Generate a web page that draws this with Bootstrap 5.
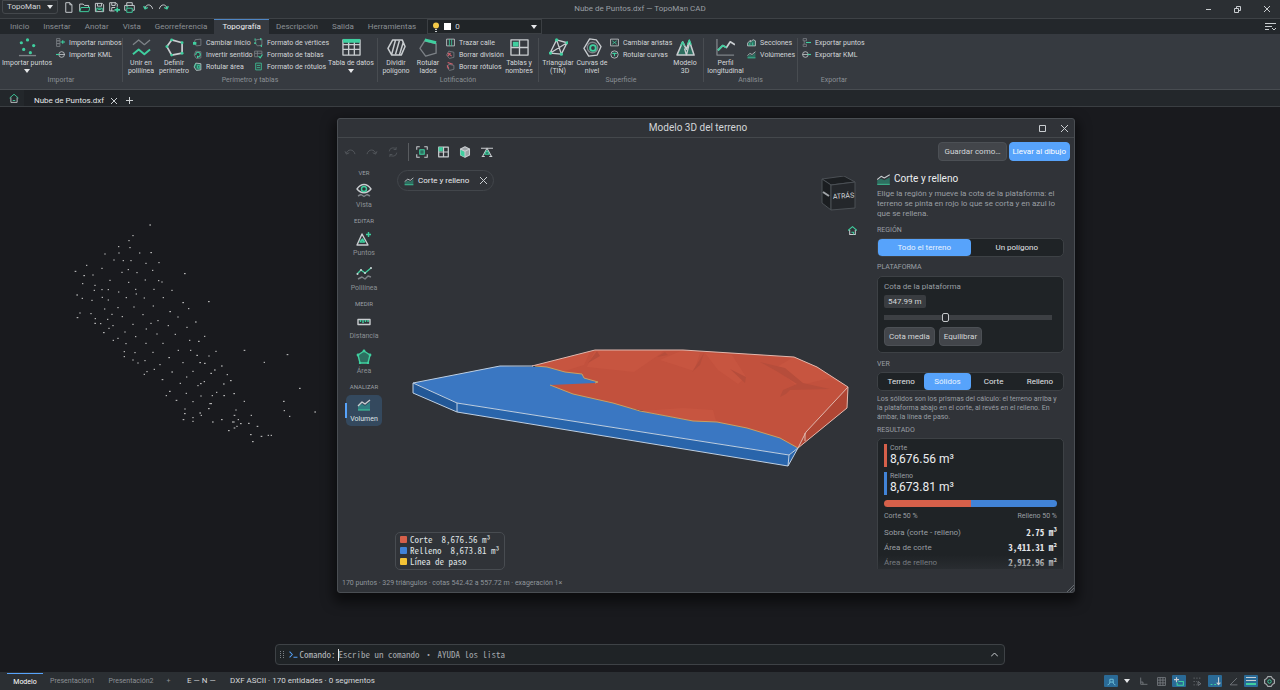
<!DOCTYPE html>
<html lang="es" data-bs-theme="dark">
<head>
<meta charset="utf-8">
<meta name="viewport" content="width=device-width, initial-scale=1">
<title>Nube de Puntos.dxf — TopoMan CAD</title>
<link href="https://cdn.jsdelivr.net/npm/bootstrap@5.3.0/dist/css/bootstrap.min.css" rel="stylesheet">
<style>
:root{--bar:#2b2f33;--ink:#d3d6d9;--dim:#8b9095;--line:#44484d;--deep:#1f2326;--teal:#3fcf9f;--blue:#57a3fb;--mono:"Noto Sans Mono CJK SC","Liberation Mono",monospace}
body{font:8px/10px Roboto,"Noto Sans",sans-serif;color:var(--ink);background:#191a1e;overflow:hidden}
button,select,input{font:inherit;color:inherit;background:none;border:0;padding:0}
svg{display:block;flex:none;fill:none;stroke:#c9cdd0;stroke-linejoin:round}
svg:not([stroke-width]){stroke-width:1.4}
.t{stroke:var(--teal)}.tf{fill:var(--teal);stroke:none}.wf{fill:#d3d6d9;stroke:none}.gr{stroke:#7d8287}.dk{fill:#2d6f60}.rd{stroke:#d2606c}
/* title bar and tabs */
.titlebar{height:19px;background:var(--bar);border-bottom:1px solid #3e4246;display:grid;grid-template-columns:1fr auto 1fr}
.appmenu{width:56px;height:14px;border:1px solid #44484c;border-radius:0 0 3px 3px;margin-left:2px}
.caret{border:3px solid transparent;border-top:4px solid #e6e8ea;border-bottom:0;width:0;height:0;display:inline-block}
.tabrow{height:15px;background:#23272b}
.rtab{padding:0 7px;height:15px;color:var(--dim)}
.rtab.on{background:#363a40;color:#f0f1f2;border-top:1px solid #4f86c4;padding:0 8px}
.layer{width:115px;height:15px;border:1px solid #3b3f43;background:#202427}
.layer select{appearance:none;outline:0}
.ribbon{height:56px;background:#363a40;border-bottom:1px solid #484c51}
.rgroup{height:44px;margin-top:4px;border-right:1px solid #484c51;font-size:7px;line-height:8px;padding:0 2px}
.rgroup:last-child{border:0}
.rgroup h2{font-size:7px;line-height:8px;font-weight:400;color:var(--dim);margin:0;text-align:center}
.big{width:34px;display:flex;flex-direction:column;align-items:center;white-space:nowrap;gap:2px}
.big svg{width:19px;height:19px}
.small-col{display:grid;grid-template-rows:repeat(3,12px);align-items:start}
.small-col button{display:flex;gap:4px;align-items:center;white-space:nowrap}
.small-col svg{width:9px;height:9px}
.doctabs{height:17px;background:#23272b;border-bottom:1px solid #3a3e42}
.doctab{height:16px;background:#1f2226;width:96px;padding:5px 3px 0 10px;color:#e4e6e8}
/* workspace */
.workspace{position:relative}
.cloud{position:absolute;left:40px;top:103px;stroke:#d0d0d0}
.dialog{position:absolute;left:337px;right:205px;top:11px;bottom:79px;background:#303338;border:1px solid #4a4e53;border-radius:3px;box-shadow:0 6px 12px 4px rgba(0,0,0,.5)}
.dlg-title{height:19px;border-bottom:1px solid #44484c;font-size:10px;display:grid;grid-template-columns:1fr auto 1fr}
.dlg-tools{height:27px;padding:0 4px 0 6px}
.pbtn{height:19px;border-radius:4px;background:#42454a;border:1px solid #4c5055;padding:0 4px;white-space:nowrap}
.pbtn.wide{padding:0 5px}
.pbtn.main{background:var(--blue);border-color:var(--blue);color:#fff;padding:0 3px}
.side{width:52px;font-size:7px;line-height:8px;color:var(--dim);padding-top:3px}
.side h3{font-size:6px;line-height:9px;font-weight:400;margin:4px 0;color:#9a9fa4}
.side h3:first-child{margin-top:0}
.tool{width:36px;height:31px;border-radius:5px;display:flex;flex-direction:column;align-items:center;justify-content:space-between;padding:2px 0 3px}
.tool+.tool{margin-top:4px}
.tool.on{background:#34495e;color:#dfe3e6;position:relative}
.tool.on::before{content:"";position:absolute;left:-1px;top:8px;width:2px;height:15px;background:var(--blue)}
.view{position:relative}
.view .scene{position:absolute;inset:0;width:100%;height:100%;stroke-width:1}
.chip{position:absolute;left:7px;top:5px;width:97px;height:21px;border:1px solid #42464b;border-radius:11px;padding:0 6px;color:#e8eaec}
.vcube{position:absolute;right:13px;top:11px}
.vhome{position:absolute;right:13px;top:61px}
.legend{position:absolute;left:5px;bottom:4px;border:1px solid #484c51;border-radius:5px;padding:1px 5px 2px 4px;font:9px/11px var(--mono);white-space:pre;color:#dfe1e3}
.sw{width:7px;height:7px;border-radius:1px;margin-right:3px}
.panel{width:204px;padding:8px 10px 0 7px}
.panel h4{font-size:10px;line-height:12px;font-weight:400;margin:0;color:#eceef0}
.panel h5{font-size:7px;line-height:10px;font-weight:400;color:#9a9fa4;margin:0}
.clipbox{height:396px;overflow:hidden;position:relative}
.clipbox::after{content:"";position:absolute;left:0;right:0;bottom:0;height:14px;background:linear-gradient(transparent,rgba(48,51,56,.6))}
.muted2{color:#9a9fa4}
.note{font-size:7px;line-height:9px}
.seg{height:19px;background:var(--deep);border:1px solid #3d4145;border-radius:5px}
.seg label{flex:1;display:flex;align-items:center;justify-content:center;border-radius:4px;color:#e2e4e6}
.seg .btn-check:checked+label{background:var(--blue);color:#e9f3ff}
.pcard{background:var(--deep);border:1px solid #3d4145;border-radius:5px;padding:5px 6px}
.val{background:#393c40;border-radius:2px;height:13px;width:42px;padding:0 4px;outline:0}
.slider{appearance:none;width:168px;height:9px;display:block}
.slider::-webkit-slider-runnable-track{height:5px;background:#3c3f43}
.slider::-webkit-slider-thumb{appearance:none;width:7px;height:9px;margin-top:-2px;border:1px solid #c4c7ca;border-radius:2px;background:#25282c}
.amount{border-left:3px solid;padding-left:3px;height:23px;margin-bottom:5px}
.amount span{display:block;font-size:7px;line-height:8px}
.amount b{display:block;font-size:12px;line-height:15px;font-weight:400;color:#eceef0}
.bar2{height:7px;border-radius:4px;background:none}
.rows td{padding:0;height:15px;vertical-align:middle}
.rows td+td{text-align:right;font:700 9px/10px var(--mono);color:#e4e6e8}
.dlg-foot{font-size:7px;height:18px;padding:0 0 0 4px;color:#8f959b}
.cmd{width:57.1%;height:21px;margin-bottom:7px;border:1px solid #3e4246;border-radius:4px;background:#1f2326;font:9px/12px var(--mono);padding:0 6px 0 4px;color:#b5b9bd}
.cmd input{flex:1;outline:0;border-left:1px solid #e8e8e8;height:12px}
.cmd input::placeholder{color:#a3a7ab;opacity:1}
.status{height:18px;background:var(--bar)}
.status .lay{font-size:7px;color:var(--dim);height:17px}
.status .lay.on{color:#fff;border-top:1px solid var(--blue)}
.ic{width:14px;height:12px;border-radius:1px;display:flex;align-items:center;justify-content:center}
.ic.on{background:#2a6a96}
</style>
</head>
<body class="vh-100 d-flex flex-column">
<header>
<div class="titlebar">
 <div class="d-flex align-items-start">
  <button class="appmenu d-flex align-items-center justify-content-between px-1">TopoMan <i class="caret"></i></button>
  <div class="d-flex align-items-center ms-1" style="height:14px">
   <button aria-label="Nuevo"><svg width="13" height="11" viewBox="0 0 16 16"><path d="M4 1h6l3 3v11H4zM10 1v3h3"/></svg></button>
   <button aria-label="Abrir" class="ms-1"><svg width="11" height="11" viewBox="0 0 16 16"><path d="M1 13V3h5l2 2h6v3"/><path class="t" d="M1 14l2-6h13l-2 6z"/></svg></button>
   <button aria-label="Guardar" class="ms-1"><svg width="11" height="11" viewBox="0 0 16 16"><path d="M2 2h10l2 2v10H2zM5 2v4h6V2"/><path class="t" d="M4 14V9h8v5M6 11h4"/></svg></button>
   <button aria-label="Guardar como" class="ms-1"><svg width="11" height="11" viewBox="0 0 16 16"><path d="M1 1h9l2 2v4M1 1v12h7M4 1v4h5V1M4 13V8h5"/><path class="t" stroke-width="2.4" d="M12 8v7M8 11.500h8"/></svg></button>
   <button aria-label="Imprimir" class="ms-1"><svg width="11" height="11" viewBox="0 0 16 16"><path d="M4 5V1h8v4M3 12H1V5h14v7h-2"/><path class="t" d="M4 9h8v6H4zM3 7h3"/></svg></button>
   <button aria-label="Deshacer" class="ms-2"><svg width="11" height="11" viewBox="0 0 16 16"><path d="M3 9c1-6 9-7 11 1"/><path class="t" stroke-width="2" d="M1 6l2 4 4-2"/></svg></button>
   <button aria-label="Rehacer" class="ms-1"><svg width="11" height="11" viewBox="0 0 16 16"><path d="M2 10c2-8 10-7 11-1"/><path class="t" stroke-width="2" d="M15 6l-2 4-4-2"/></svg></button>
  </div>
 </div>
 <div class="align-self-end muted2 pb-1">Nube de Puntos.dxf — TopoMan CAD</div>
 <div class="d-flex align-items-center justify-content-end pe-2" style="gap:20px">
  <button aria-label="Minimizar"><svg width="9" height="9" viewBox="0 0 9 9" stroke-width="1"><path d="M2 4.500h5"/></svg></button>
  <button aria-label="Restaurar"><svg width="9" height="9" viewBox="0 0 9 9" stroke-width="1"><path d="M1.500 3.500h4v4h-4zM3.500 3.500v-2h4v4h-2"/></svg></button>
  <button aria-label="Cerrar"><svg width="10" height="10" viewBox="0 0 10 10" stroke-width="1"><path d="M2 2l6 6M8 2l-6 6"/></svg></button>
 </div>
</div>
<div class="tabrow d-flex">
 <nav class="d-flex" style="padding-left:3px">
  <button class="rtab">Inicio</button><button class="rtab">Insertar</button><button class="rtab">Anotar</button><button class="rtab">Vista</button><button class="rtab">Georreferencia</button><button class="rtab on">Topografía</button><button class="rtab">Descripción</button><button class="rtab">Salida</button><button class="rtab">Herramientas</button>
 </nav>
 <div class="layer d-flex align-items-center ms-1 px-1 gap-1">
  <svg width="8" height="10" viewBox="0 0 8 10" stroke-width="1"><circle cx="4" cy="3.500" r="3" fill="#f3c948" stroke="none"/><path d="M3 7.500h2M3 9.500h2"/></svg>
  <span style="width:7px;height:7px;background:#fff"></span>
  <select aria-label="Capa" class="flex-grow-1"><option>0</option></select><i class="caret"></i>
 </div>
 <button class="ms-auto pe-1" aria-label="Opciones de cinta"><svg width="11" height="9" viewBox="0 0 11 9" stroke-width="1"><path d="M0 1.500h11M0 4.500h7M0 7.500h4M7 6l2 2 2-2"/></svg></button>
</div>
<div class="ribbon d-flex">
 <section class="rgroup" style="width:123px">
  <div class="d-flex" style="height:38px">
   <button class="big" style="width:50px"><svg viewBox="0 0 20 20"><g class="tf"><circle cx="3.500" cy="5" r="1.700"/><circle cx="10" cy="2" r="1.700"/><circle cx="16.500" cy="8" r="1.700"/><circle cx="6" cy="12" r="1.700"/><circle cx="13" cy="15.500" r="1.700"/></g><path d="M1 18.500h18" class="gr"/></svg>Importar puntos<i class="caret"></i></button>
   <div class="small-col ms-1"><button><svg viewBox="0 0 16 16"><path class="gr" d="M1 1h6v4H1zM1 5h6v5H1zM1 10h6v5H1z"/><path class="t" stroke-width="2" d="M8 7h8M12 4v6"/></svg>Importar rumbos</button><button><svg viewBox="0 0 16 16"><path d="M5 8h11"/><circle cx="10" cy="8" r="5"/><path class="t" stroke-width="2" d="M0 8h6"/></svg>Importar KML</button></div>
  </div><h2>Importar</h2>
 </section>
 <section class="rgroup" style="width:255px">
  <div class="d-flex" style="height:38px">
   <button class="big" style="width:32px"><svg viewBox="0 0 20 20"><path class="gr" d="M1 7l6-5 6 5 6-5"/><path class="t" stroke-width="2" d="M1 17l6-5 6 5 6-5"/></svg><span>Unir en<br>polilínea</span></button>
   <button class="big"><svg viewBox="0 0 20 20"><path stroke-width="1.800" d="M7 2l11 3v11L7 18 2 9z"/><g class="tf"><circle cx="7" cy="2" r="1.500"/><circle cx="18" cy="5" r="1.500"/><circle cx="18" cy="16" r="1.500"/><circle cx="7" cy="18" r="1.500"/><circle cx="2" cy="9" r="1.500"/></g></svg><span>Definir<br>perímetro</span></button>
   <div class="small-col" style="margin-left:2px;width:60px"><button><svg viewBox="0 0 16 16"><path class="gr" d="M4 3l10-1v11l-8 1-4-5z"/><path class="tf" d="M0 7h6v5H0z"/></svg>Cambiar inicio</button><button><svg viewBox="0 0 16 16"><path class="gr" d="M5 2l9 1v11l-8 1-4-6z"/><path class="t" stroke-width="2" d="M5 9a4 4 0 1 1 3 3M8 14v-4"/></svg>Invertir sentido</button><button><svg viewBox="0 0 16 16"><path class="dk" d="M5 2l9 1v11l-8 1-4-6z"/><path class="t" d="M2 9l3-7M8 6h4v5H8z"/></svg>Rotular área</button></div>
   <div class="small-col" style="margin-left:1px;width:74px"><button><svg viewBox="0 0 16 16"><path class="gr" d="M4 3l10-1v11l-8 1-4-5z"/><path class="t" stroke-width="2" d="M2 1v4M12 0v4M13 12v4M0 9h4"/></svg>Formato de vértices</button><button><svg viewBox="0 0 16 16"><path class="gr" d="M1 2h13v6M1 2v10h6M1 6h13M6 2v10"/><path class="t" stroke-width="2" d="M8 11l3 3 4-6"/></svg>Formato de tablas</button><button><svg viewBox="0 0 16 16"><path class="t" d="M3 2h10v12H3zM5 6h6M5 10h6"/></svg>Formato de rótulos</button></div>
   <button class="big" style="width:46px"><svg viewBox="0 0 20 20"><path d="M1 2h18v16H1zM1 7h18M1 12h18M7 2v16M13 2v16"/><path class="tf" d="M1 1h18v4H1z"/></svg>Tabla de datos<i class="caret"></i></button>
  </div><h2>Perímetro y tablas</h2>
 </section>
 <section class="rgroup" style="width:161px">
  <div class="d-flex" style="height:38px">
   <button class="big" style="width:32px"><svg viewBox="0 0 20 20"><path stroke-width="1.600" d="M6 2h10l3 7-4 9H5L1 11zM9 2L5 17M13 3L9 17M17 5l-4 13"/></svg><span>Dividir<br>polígono</span></button>
   <button class="big" style="width:32px"><svg viewBox="0 0 20 20"><path class="gr" d="M6 3l12 3v10L7 19 1 11z"/><path class="t" stroke-width="3" d="M6 2l12 3"/></svg><span>Rotular<br>lados</span></button>
   <div class="small-col" style="margin-left:2px;width:57px"><button><svg viewBox="0 0 16 16"><path d="M1 2h14v12H1z"/><path class="t" d="M6 2v12M10 2v12"/></svg>Trazar calle</button><button><svg viewBox="0 0 16 16"><path class="gr" d="M5 2l9 2v9l-8 2-5-6z"/><path class="rd" stroke-width="2" d="M3 5l7 6M8 5l-5 6"/></svg>Borrar división</button><button><svg viewBox="0 0 16 16"><path class="gr" d="M5 4l9 2v7l-8 2-4-6z"/><path class="rd" stroke-width="2" d="M3 1l9 3M2 6l3 6"/></svg>Borrar rótulos</button></div>
   <button class="big" style="width:32px"><svg viewBox="0 0 20 20"><path d="M1 2h18v16H1zM1 10h18M10 2v16"/><path class="tf" d="M3 4h6v5H3z"/></svg><span>Tablas y<br>nombres</span></button>
  </div><h2>Lotificación</h2>
 </section>
 <section class="rgroup" style="width:165px">
  <div class="d-flex" style="height:38px">
   <button class="big"><svg viewBox="0 0 20 20"><path d="M1 16L8 2l11 3-6 12zM8 2l5 15M1 16L19 5"/><g class="tf"><circle cx="8" cy="2" r="1.700"/><circle cx="19" cy="5" r="1.700"/><circle cx="13" cy="17" r="1.700"/><circle cx="1.500" cy="16" r="1.700"/></g></svg><span>Triangular<br>(TIN)</span></button>
   <button class="big"><svg viewBox="0 0 20 20"><path d="M7 1l7 1 5 7-4 9-9 1-5-8z"/><circle cx="10" cy="10" r="5.500" class="gr"/><circle cx="10.500" cy="10.500" r="3" class="t" stroke-width="2"/></svg><span>Curvas de<br>nivel</span></button>
   <div class="small-col" style="margin-left:1px;width:59px"><button><svg viewBox="0 0 16 16"><path d="M1 2h14v12H1z"/><path class="t" d="M4 5l8 6M12 5l-8 6"/></svg>Cambiar aristas</button><button><svg viewBox="0 0 16 16"><circle cx="8" cy="8" r="6.500"/><path class="t" d="M4 6h8M8 6v5" stroke-width="2"/></svg>Rotular curvas</button></div>
   <button class="big" style="width:32px"><svg viewBox="0 0 20 20"><path class="dk" stroke-width="1.600" d="M1 18L7 4l4 8 3-9 5 15z"/><path d="M11 18l-2-7M11 18l3-12"/><path class="t" d="M5 8l2-4 2 4M12 7l2-5 2 5"/></svg><span>Modelo<br>3D</span></button>
  </div><h2>Superficie</h2>
 </section>
 <section class="rgroup" style="width:94px">
  <div class="d-flex" style="height:38px">
   <button class="big" style="width:40px"><svg viewBox="0 0 20 20"><path class="gr" d="M1 1v17h18"/><path stroke-width="1.800" d="M2 13l5-5 4 2 4-6 5 3"/><path class="t" stroke-width="1.800" d="M2 13l5-5 4 2"/></svg><span>Perfil<br>longitudinal</span></button>
   <div class="small-col" style="margin-left:2px"><button><svg viewBox="0 0 16 16"><path class="dk" d="M1 14V9l5-5v3l5-4 4 2v9z"/><path class="t" d="M5 14V9M10 14V8"/></svg>Secciones</button><button><svg viewBox="0 0 16 16"><path class="dk" stroke="none" d="M1 14v-3l4-3 4 2 6-6v10z"/><path d="M1 10l4-4 4 2 6-5"/><path class="t" d="M1 14h14"/></svg>Volúmenes</button></div>
  </div><h2>Análisis</h2>
 </section>
 <section class="rgroup" style="width:72px">
  <div class="d-flex" style="height:38px">
   <div class="small-col" style="margin-left:2px"><button><svg viewBox="0 0 16 16"><path class="gr" d="M2 1h6v4H2zM2 11h6v4H2zM4 5v6"/><path class="t" stroke-width="2" d="M7 8h9"/></svg>Exportar puntos</button><button><svg viewBox="0 0 16 16"><path d="M1 8h10"/><circle cx="6" cy="8" r="5"/><path class="t" stroke-width="2" d="M10 8h6"/></svg>Exportar KML</button></div>
  </div><h2>Exportar</h2>
 </section>
</div>
<div class="doctabs d-flex align-items-center">
 <button aria-label="Inicio" style="padding:0 5px 0 9px"><svg width="10" height="10" viewBox="0 0 16 16"><path d="M3 7v8h10V7"/><path class="t" d="M1 8l7-6 7 6M6 12h4"/></svg></button>
 <div class="doctab d-flex align-items-center justify-content-between">Nube de Puntos.dxf <button aria-label="Cerrar pestaña"><svg width="6" height="6" viewBox="0 0 6 6" stroke-width="1"><path d="M0 0l6 6M6 0L0 6"/></svg></button></div>
 <button aria-label="Nueva pestaña" style="padding:4px 0 0 6px"><svg width="7" height="7" viewBox="0 0 7 7" stroke-width="1"><path d="M3.500 0v7M0 3.500h7"/></svg></button>
</div>
</header>

<main class="workspace flex-grow-1 d-flex flex-column justify-content-end align-items-center">
<svg class="cloud" width="300" height="250" viewBox="0 0 900 750" stroke-width="3"><path d="M328 45h5M277 77h4M265 92h4M234 110h4M268 113h4M193 132h4M235 129h4M297 129h4M331 128h5M220 150h4M248 152h4M271 152h4M316 160h4M355 158h4M138 166h4M184 175h4M104 184h5M263 179h4M336 181h4M130 197h5M157 195h4M244 187h4M289 188h4M432 191h5M126 221h4M208 211h4M264 217h4M314 210h4M354 212h4M364 216h4M163 226h4M161 241h4M184 239h4M203 239h4M234 246h4M285 238h4M287 252h4M340 238h4M394 241h4M109 255h5M125 265h4M154 271h4M185 262h4M203 270h4M257 263h4M311 264h4M368 263h4M427 278h5M504 275h5M192 297h4M232 293h4M280 291h4M338 288h4M388 305h5M444 296h4M118 309h4M110 323h5M151 311h4M164 326h4M163 340h5M180 341h4M201 328h4M214 313h4M245 320h4M307 314h4M352 332h4M412 321h4M465 336h5M189 368h5M205 355h4M217 347h4M277 343h4M331 340h4M317 357h4M383 347h4M439 352h4M253 366h4M285 380h4M349 372h4M404 373h4M492 379h4M218 391h4M232 385h4M256 401h4M316 400h4M367 400h4M447 391h4M474 394h5M251 425h4M251 440h4M283 428h4M337 427h4M413 421h4M450 421h4M469 436h5M505 438h4M526 424h4M611 421h5M740 434h5M277 450h4M292 459h4M313 452h4M358 464h4M385 443h5M427 458h4M478 458h5M492 460h5M543 468h5M671 457h4M341 478h4M319 485h4M311 493h4M394 486h5M457 484h4M438 501h4M511 490h5M522 480h5M560 494h4M365 509h5M419 520h4M472 527h4M480 521h5M491 515h4M570 512h5M549 522h5M777 535h5M387 544h5M377 557h4M437 550h4M481 558h4M515 557h4M528 547h4M550 557h5M580 551h5M407 571h5M457 575h4M508 581h8M611 574h4M729 574h5M433 597h4M504 596h5M432 611h5M478 609h5M482 616h4M586 600h4M731 602h4M823 606h5M428 629h5M457 623h4M457 634h4M516 636h5M543 629h5M581 616h5M593 629h4M632 616h4M747 619h4M576 636h8M600 641h5M624 640h5M589 649h4M581 654h5M564 662h5M650 649h5M630 674h5M662 679h5M683 676h4M692 676h4M636 695h5"/></svg>

<section class="dialog d-flex flex-column" role="dialog" aria-label="Modelo 3D del terreno">
 <div class="dlg-title align-items-center"><span></span><span class="me-3">Modelo 3D del terreno</span>
  <span class="d-flex justify-content-end" style="gap:13px;padding-right:5px"><button aria-label="Maximizar"><svg width="9" height="9" viewBox="0 0 9 9" stroke-width="1"><path d="M1.500 1.500h6v6h-6z"/></svg></button><button aria-label="Cerrar"><svg width="9" height="9" viewBox="0 0 9 9" stroke-width="1"><path d="M1 1l7 7M8 1L1 8"/></svg></button></span></div>
 <div class="dlg-tools d-flex align-items-center">
  <div class="d-flex align-items-center" style="gap:10px">
   <button disabled aria-label="Deshacer"><svg class="gr" width="12" height="10" viewBox="0 0 16 14" opacity=".45"><path d="M3 9c1-6 10-7 12 1M1 6l2 4 4-2"/></svg></button>
   <button disabled aria-label="Rehacer"><svg class="gr" width="12" height="10" viewBox="0 0 16 14" opacity=".45"><path d="M1 10c2-8 11-7 12-1M15 6l-2 4-4-2"/></svg></button>
   <button disabled aria-label="Recalcular"><svg class="gr" width="10" height="10" viewBox="0 0 16 16" opacity=".45"><path d="M2 7a6 6 0 0 1 11-3M14 9a6 6 0 0 1-11 3M13 0v4h-4M3 16v-4h4"/></svg></button>
   <span class="vr" style="height:18px"></span>
   <button aria-label="Encuadrar" style="margin-left:-3px"><svg width="12" height="12" viewBox="0 0 16 16"><path d="M1 5V1h4M11 1h4v4M15 11v4h-4M5 15H1v-4"/><path class="t dk" d="M5 5h6v6H5z"/></svg></button>
   <button aria-label="Vistas"><svg width="11" height="12" viewBox="0 0 16 16" stroke-width="1.800"><path d="M1 1h14v14H1zM8 1v14M1 8h14"/><path class="tf" d="M1 1h6v6H1z"/></svg></button>
   <button aria-label="Isométrica"><svg width="12" height="12" viewBox="0 0 16 16"><path d="M8 1l6 3v8l-6 3-6-3V4z" fill="#9ea3a7"/><path class="tf" d="M2 5l6 3v7l-6-3z"/><path d="M2 4l6 3 6-3M8 7v8"/></svg></button>
   <button aria-label="Exagerar"><svg width="12" height="12" viewBox="0 0 16 16"><path d="M2 14L8 3l6 11"/><path class="dk t" d="M5 11l3-5 3 5z"/><path d="M0 3h16M1 14h4M11 14h4"/></svg></button>
  </div>
  <div class="ms-auto d-flex" style="gap:2px"><button class="pbtn wide">Guardar como…</button><button class="pbtn main">Llevar al dibujo</button></div>
 </div>
 <div class="d-flex flex-grow-1">
  <nav class="side d-flex flex-column align-items-center">
   <h3>VER</h3>
   <button class="tool"><svg width="16" height="15" viewBox="0 0 16 15"><path d="M1 6c4-6 10-6 14 0-4 5-10 5-14 0z"/><circle cx="8" cy="6" r="2.500" class="t"/><path class="gr" d="M2 13l3-1.500 3 2 3-2 3 1.500"/></svg>Vista</button>
   <h3>EDITAR</h3>
   <button class="tool"><svg width="16" height="15" viewBox="0 0 16 15"><path d="M1 14L6 3l6 11zM3 14h8"/><path class="t" d="M4 11l2.500-3 2 3zM10 3.500h5M12.500 1v5"/></svg>Puntos</button>
   <button class="tool"><svg width="16" height="15" viewBox="0 0 16 15"><path class="t" d="M1 8l4-4 4 3 6-5"/><g class="wf"><circle cx="5" cy="4" r="1"/><circle cx="9" cy="7" r="1"/><circle cx="15" cy="2" r="1"/><circle cx="1.500" cy="8" r="1"/></g><path class="gr" d="M2 13l4-2 3 2 3-3 3 1"/></svg>Polilínea</button>
   <h3>MEDIR</h3>
   <button class="tool"><svg width="16" height="15" viewBox="0 0 16 15"><path d="M2 5.500h12v5H2z"/><path class="t" d="M4.500 6v2M7 6v3M9.500 6v2M12 6v2"/></svg>Distancia</button>
   <button class="tool"><svg width="16" height="15" viewBox="0 0 16 15"><path class="t dk" d="M8 2l6 4-2 8H4L2 6z"/><g class="tf"><circle cx="8" cy="2" r="1.400"/><circle cx="14" cy="6" r="1.400"/><circle cx="12" cy="14" r="1.200"/><circle cx="4" cy="14" r="1.200"/><circle cx="2" cy="6" r="1.400"/></g></svg>Área</button>
   <h3>ANALIZAR</h3>
   <button class="tool on"><svg width="16" height="15" viewBox="0 0 16 15"><path fill="#2f7f82" stroke="none" d="M2 13V9l4-2 3 2 5-4v8z"/><path d="M2 9l4-4 3 2 5-4"/><path class="t" stroke-width="1" d="M2 13h12"/></svg>Volumen</button>
  </nav>
  <div class="view flex-grow-1">
   <svg class="scene" viewBox="390 165 480 409" role="img" aria-label="Terreno en 3D">
    <path fill="#c2513d" stroke="none" d="M532 366L595 350L683 350L794 357L817 367L848 387L847 408L798 448L693 421L550 392L545 366z"/>
    <g stroke="none" fill="#c75540"><path d="M595 350L587 367L634 372L660 354L664 350zM683 350L700 353L694 371L660 360zM705 353L732 355L746 377L738 384L718 370zM794 357L775 368L797 386L830 378L848 387L817 367zM683 408L713 410L716 421L693 421L640 411zM535 366L590 352L584 365L565 371z"/></g>
    <g stroke="none" fill="#b64d3b"><path d="M597 351L588 363L600 356zM704 353L692 372L700 365zM665 352L657 357L668 355zM760 362L778 372L797 384L783 390L780 397L786 394L790 390L830 389L803 383L785 368zM730 369L746 377L745 383z"/></g>
    <path fill="#b04634" stroke="none" d="M848 387L847 408L798 448L806 432z"/>
    <path fill="#3a77c2" stroke="none" d="M413 383L500 366L547 367L565 372L582 374L584 378L598 382L595 383L550 385L573 394L613 403L640 411L693 421L717 422L747 428L780 438L798 448L789 455L457 403z"/>
    <path fill="#225897" stroke="none" d="M413 383l44 20v9l-44-19z"/><path fill="#2965ab" stroke="none" d="M457 403L789 455L788 466L457 412z"/><path fill="#2965ab" stroke="none" d="M789 455L798 448L788 466z"/>
    <path stroke="#c9a061" d="M535 366L547 367L565 372L582 374L584 378L598 382L595 383M550 385L573 394L613 403L640 411L693 421L717 422L747 428L780 438L798 448"/>
    <path stroke="#bdcfe3" d="M533 366L500 366L413 383V393L457 412L788 466L798 448L789 455L457 403L413 383M457 403V412M789 455L788 466"/>
    <path stroke="#e0b8ae" d="M532 366L595 350L683 350L794 357L817 367L848 387L806 432L798 448L847 408L848 387M805 433v8"/>
   </svg>
   <div class="chip d-flex align-items-center"><svg width="10" height="10" viewBox="0 0 16 16"><path class="dk" stroke="none" d="M1 14v-4l5-3 4 2 5-4v9z"/><path d="M1 9l5-4 4 2 5-4"/><path class="t" d="M1 14h14"/></svg><span class="ms-1">Corte y relleno</span><button aria-label="Cerrar" class="ms-auto"><svg width="7" height="7" viewBox="0 0 7 7" stroke-width="1"><path d="M0 0l7 7M7 0L0 7"/></svg></button></div>
   <svg class="vcube" width="36" height="36" viewBox="0 0 36 36" stroke-width="1"><path fill="#1c1f22" stroke="#4b5055" d="M1 3l22-3 11 6-24 3z"/><path fill="#1b1e21" stroke="#4b5055" d="M1 3l9 6v25l-9-7z"/><path fill="#24272b" stroke="#4b5055" d="M10 9l24-3v26l-24 2z"/><path stroke="#a0a4a8" stroke-width="2" d="M2 16l6 4"/><text x="12" y="23" fill="#d5d8da" stroke="none" font-size="7" transform="rotate(-4 12 23)">ATRÁS</text></svg>
   <button class="vhome" aria-label="Vista inicial"><svg width="9" height="9" viewBox="0 0 16 16" stroke-width="1.800"><path d="M3 7v8h10V7"/><path class="t" d="M0 8l8-7 8 7M6 11h4v4"/></svg></button>
   <div class="legend"><div class="d-flex align-items-center"><i class="sw" style="background:#d6604a"></i>Corte  8,676.56 m³</div><div class="d-flex align-items-center"><i class="sw" style="background:#4183d7"></i>Relleno  8,673.81 m³</div><div class="d-flex align-items-center"><i class="sw" style="background:#f5c436"></i>Línea de paso</div></div>
  </div>
  <aside class="panel"><div class="clipbox">
   <div class="d-flex align-items-center" style="gap:4px"><svg width="13" height="11" viewBox="0 0 16 14"><path class="dk" stroke="none" d="M0 12V8l5-2 4 2 7-4v8z"/><path d="M0 7l5-4 4 2 7-4"/><path class="t" d="M0 13h16"/></svg><h4>Corte y relleno</h4></div>
   <p class="muted2" style="margin:4px 0 6px">Elige la región y mueve la cota de la plataforma: el terreno se pinta en rojo lo que se corta y en azul lo que se rellena.</p>
   <h5>REGIÓN</h5>
   <div class="seg d-flex" style="margin:3px 0 5px"><input class="btn-check" type="radio" name="reg" id="r1" checked><label for="r1">Todo el terreno</label><input class="btn-check" type="radio" name="reg" id="r2"><label for="r2">Un polígono</label></div>
   <h5>PLATAFORMA</h5>
   <div class="pcard" style="height:77px;margin-top:4px">
    <label for="cota" class="d-block muted2">Cota de la plataforma</label>
    <input id="cota" class="val d-block" style="margin:3px 0 5px" value="547.99 m">
    <input class="slider" type="range" aria-label="Cota" min="0" max="100" value="36">
    <div class="d-flex" style="gap:4px;margin-top:5px"><button class="pbtn">Cota media</button><button class="pbtn">Equilibrar</button></div>
   </div>
   <h5 style="margin:6px 0 3px">VER</h5>
   <div class="seg d-flex"><input class="btn-check" type="radio" name="ver" id="v1"><label for="v1">Terreno</label><input class="btn-check" type="radio" name="ver" id="v2" checked><label for="v2">Sólidos</label><input class="btn-check" type="radio" name="ver" id="v3"><label for="v3">Corte</label><input class="btn-check" type="radio" name="ver" id="v4"><label for="v4">Relleno</label></div>
   <p class="muted2 note pe-1" style="margin:4px 0 3px">Los sólidos son los prismas del cálculo: el terreno arriba y la plataforma abajo en el corte, al revés en el relleno. En ámbar, la línea de paso.</p>
   <h5>RESULTADO</h5>
   <div class="pcard pb-4" style="margin-top:3px">
    <div class="amount" style="border-color:#d6604a"><span class="muted2">Corte</span><b>8,676.56 m³</b></div>
    <div class="amount" style="border-color:#4183d7"><span class="muted2">Relleno</span><b>8,673.81 m³</b></div>
    <div class="progress bar2"><div class="progress-bar" style="width:50%;background:#d6604a"></div><div class="progress-bar" style="width:50%;background:#4183d7"></div></div>
    <div class="d-flex justify-content-between muted2" style="font-size:7px;margin:4px 0"><span>Corte 50 %</span><span>Relleno 50 %</span></div>
    <table class="rows w-100 muted2"><tr><td>Sobra (corte - relleno)</td><td>2.75 m³</td></tr><tr><td>Área de corte</td><td>3,411.31 m²</td></tr><tr><td>Área de relleno</td><td>2,912.96 m²</td></tr></table>
   </div>
  </div></aside>
 </div>
 <div class="dlg-foot d-flex align-items-center justify-content-between">170 puntos · 329 triángulos · cotas 542.42 a 557.72 m · exageración 1×<svg class="gr align-self-end" width="7" height="7" viewBox="0 0 7 7" stroke-width=".7"><path d="M0 7l7-7M3 7l4-4"/></svg></div>
</section>

<div class="cmd d-flex align-items-center">
 <svg width="4" height="8" viewBox="0 0 4 8" stroke-width="1" stroke-dasharray="1 1" class="gr"><path d="M.5 0v8M3.500 0v8"/></svg>
 <svg width="9" height="9" viewBox="0 0 16 16" style="margin:0 2px 0 5px;stroke:#57a3fb"><path d="M1 3l5 5-5 5M8 13h7" stroke-width="1.800"/></svg>
 <label for="cmd">Comando:</label><input id="cmd" style="margin-left:2px" placeholder="Escribe un comando · AYUDA los lista">
 <button aria-label="Historial"><svg width="7" height="5" viewBox="0 0 7 5" stroke-width="1"><path d="M0 4.500L3.500 1 7 4.500"/></svg></button>
</div>
</main>

<footer class="status d-flex align-items-center">
 <button class="lay on" style="margin-left:7px;width:36px">Modelo</button><button class="lay" style="width:59px">Presentación1</button><button class="lay" style="width:58px">Presentación2</button><button class="lay" style="width:17px">+</button>
 <span class="text-nowrap" style="width:43px;margin-left:10px">E — N —</span><span class="text-nowrap">DXF ASCII · 170 entidades · 0 segmentos</span>
 <div class="d-flex align-items-center ms-auto gap-1 pe-1">
  <button class="ic on" aria-label="Referencias"><svg width="9" height="9" viewBox="0 0 16 16" style="stroke:#7fd4e8"><path d="M1 14c3 0 4-3 4-6V4h6v5c0 3 2 5 4 5M5 9h6"/></svg></button>
  <i class="caret" style="margin:0 2px"></i>
  <button class="ic" aria-label="Orto"><svg class="gr" width="9" height="9" viewBox="0 0 16 16"><path d="M3 1v12h12M3 9h4v4"/></svg></button>
  <button class="ic" aria-label="Rejilla"><svg class="gr" width="9" height="9" viewBox="0 0 16 16"><path d="M1 1h14v14H1zM5.500 1v14M10.500 1v14M1 5.500h14M1 10.500h14"/></svg></button>
  <button class="ic on" aria-label="Entrada dinámica"><svg width="10" height="9" viewBox="0 0 16 14" stroke-width="1.800"><path d="M4 0v8M0 4h8"/><path class="t" d="M7 7h8v6H5V9"/></svg></button>
  <button class="ic" aria-label="Forzar cursor"><svg class="gr" width="9" height="9" viewBox="0 0 16 16" stroke-dasharray="2 3"><path d="M1 2h14M1 8h6M1 14h6" /><path stroke-dasharray="none" d="M9 8v7l5-3z"/></svg></button>
  <button class="ic on" aria-label="Seguimiento"><svg width="11" height="9" viewBox="0 0 18 14" stroke-width="1.800"><path d="M14 0v12M11 9l3 3 3-3"/><path class="t" d="M1 12h3M7 12h3"/></svg></button>
  <button class="ic" aria-label="Ángulo"><svg class="gr" width="9" height="9" viewBox="0 0 16 16"><path d="M14 2L2 14h13"/></svg></button>
  <button class="ic on" aria-label="Grosor de línea"><svg width="10" height="8" viewBox="0 0 10 8" stroke-width="1"><path d="M0 .5h10M0 3.500h10"/><path class="t" stroke-width="2" d="M0 7h10"/></svg></button>
  <button class="ic" aria-label="Ajustes"><svg width="11" height="11" viewBox="0 0 16 16"><path d="M5 1h6l1 3 3 1v6l-3 1-1 3H5l-1-3-3-1V5l3-1z"/><circle cx="8" cy="8" r="2.500" class="t"/></svg></button>
 </div>
</footer>
<script src="https://cdn.jsdelivr.net/npm/bootstrap@5.3.0/dist/js/bootstrap.bundle.min.js"></script>
</body>
</html>
